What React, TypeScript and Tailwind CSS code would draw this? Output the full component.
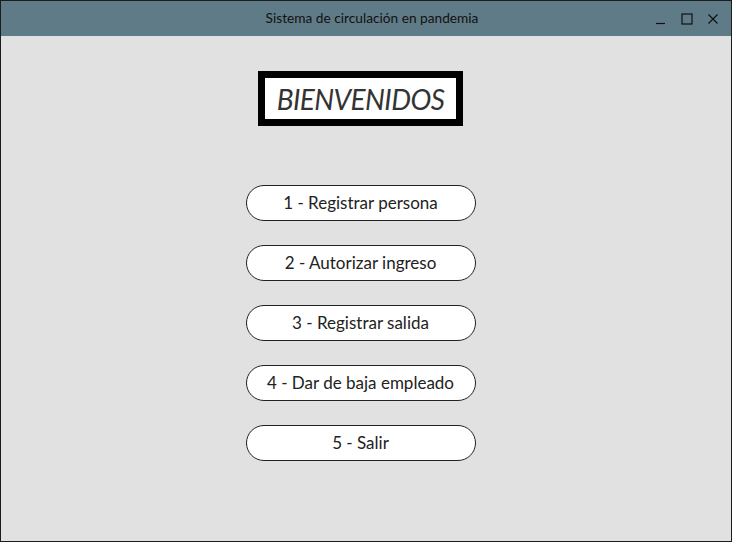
const options = [
    "1 - Registrar persona",
    "2 - Autorizar ingreso",
    "3 - Registrar salida",
    "4 - Dar de baja empleado",
    "5 - Salir",
];

const App = () => {
    return (
        <div className="w-[733px] h-[543px] bg-white" style={{ fontFamily: "Lato, 'Open Sans', sans-serif" }}>
            <div className="w-[732px] h-[542px] border border-[#1c1c1c] bg-[#e1e1e1] flex flex-col">
                <div className="h-[35px] bg-[#607b88] flex items-center relative shrink-0">
                    <span className="flex-1 text-center text-[13.7px] text-[#111] pl-[12px]">
                        Sistema de circulación en pandemia
                    </span>
                    <div className="absolute right-[12px] top-0 h-full flex items-center gap-[14px] text-[#111]">
                        <svg width="12" height="12" viewBox="0 0 12 12">
                            <path d="M1 10.5h9" stroke="#111" strokeWidth="1.2" />
                        </svg>
                        <svg width="12" height="12" viewBox="0 0 12 12">
                            <rect x="1" y="1" width="10" height="10" fill="none" stroke="#111" strokeWidth="1.2" />
                        </svg>
                        <svg width="12" height="12" viewBox="0 0 12 12">
                            <path d="M1.5 1.5l9 9M10.5 1.5l-9 9" stroke="#111" strokeWidth="1.2" />
                        </svg>
                    </div>
                </div>
                <div className="flex flex-col items-center pr-[11px]">
                    <div className="mt-[35px] w-[205px] h-[55px] border-[7px] border-black bg-white flex items-center justify-center">
                        <span className="italic text-[28px] text-[#333] tracking-[-0.6px]">BIENVENIDOS</span>
                    </div>
                    <div className="mt-[59px] flex flex-col gap-[24px]">
                        {options.map((o) => (
                            <button
                                key={o}
                                type="button"
                                className="w-[230px] h-[36px] rounded-full border border-[#222] bg-white text-[17px] text-[#222] flex items-center justify-center"
                            >
                                {o}
                            </button>
                        ))}
                    </div>
                </div>
            </div>
        </div>
    );
};

export default App;
